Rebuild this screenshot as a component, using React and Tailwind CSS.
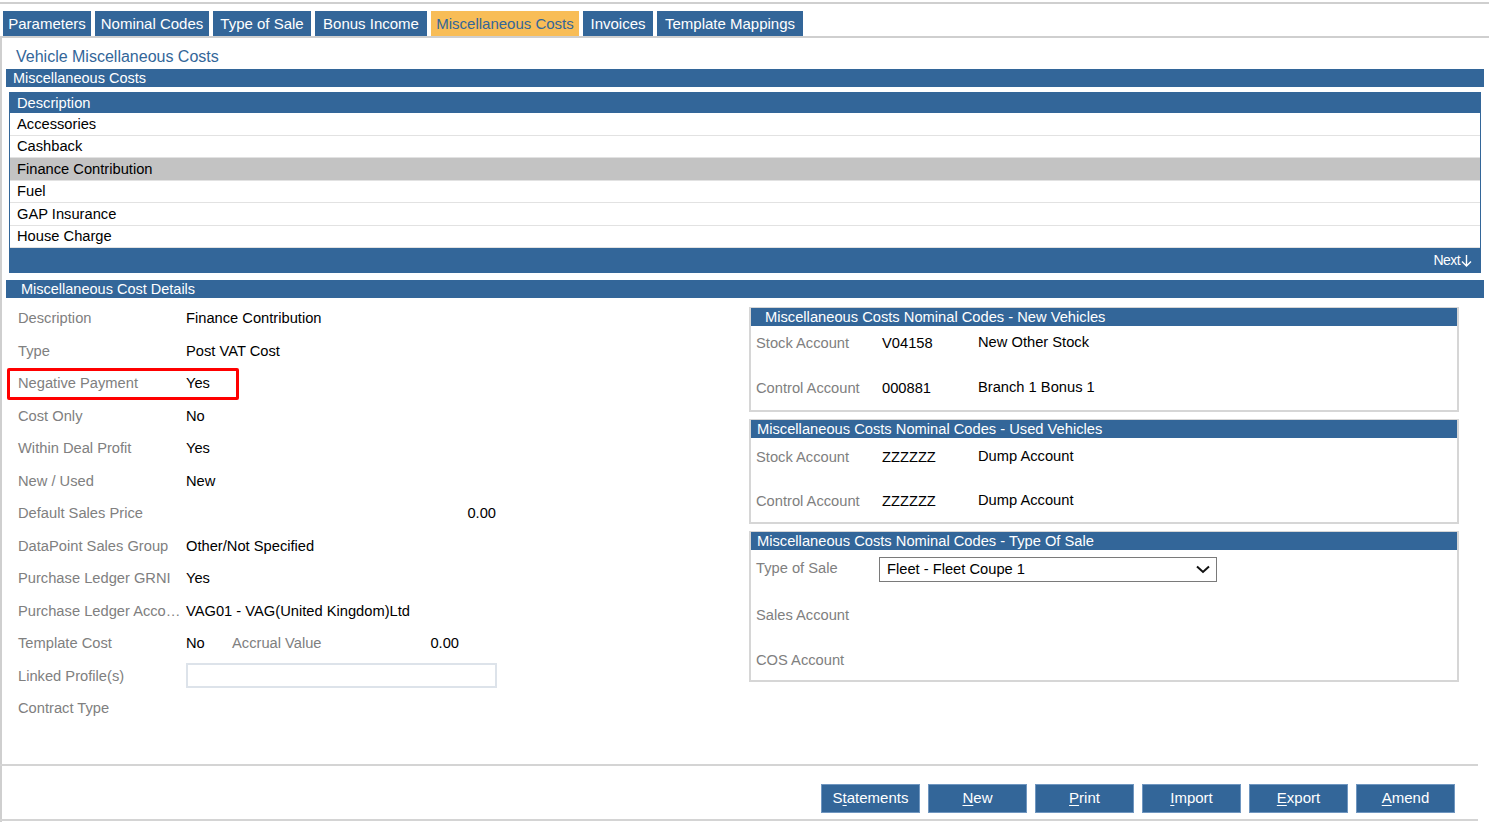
import React from "react";

const tabs = [
  ["Parameters", "w-[88px]"],
  ["Nominal Codes", "w-[114px]"],
  ["Type of Sale", "w-[98px]"],
  ["Bonus Income", "w-[112px]"],
  ["Miscellaneous Costs", "w-[148px]"],
  ["Invoices", "w-[70px]"],
  ["Template Mappings", "w-[146px]"],
];

const rows = [
  "Accessories",
  "Cashback",
  "Finance Contribution",
  "Fuel",
  "GAP Insurance",
  "House Charge",
];

function Field({ label, children, highlight }) {
  return (
    <div className="relative flex h-[32.5px] items-center">
      {highlight && (
        <div className="pointer-events-none absolute left-[5px] top-[1px] h-[32px] w-[232px] rounded-[2px] border-[3px] border-[#ff0000]" />
      )}
      <div className="w-[184px] shrink-0 truncate pl-[16px] pr-[2px] text-[14.7px] text-[#808080]">{label}</div>
      <div className="flex flex-1 items-center text-[14.7px] text-black">{children}</div>
    </div>
  );
}

function PanelHeader({ children, pl = "pl-[8px]" }) {
  return (
    <div className={`flex h-[18px] items-center bg-[#336699] ${pl} text-[14.7px] leading-none text-white`}>
      {children}
    </div>
  );
}

function AccRow({ label, code, name }) {
  return (
    <div className="flex h-[22px] items-center text-[14.7px]">
      <div className="w-[131px] shrink-0 pl-[5px] text-[#808080]">{label}</div>
      <div className="w-[96px] shrink-0 text-black">{code}</div>
      <div className="-mt-[2px] text-black">{name}</div>
    </div>
  );
}

function Btn({ pre = "", u, post }) {
  return (
    <button className="flex h-[29px] w-[99px] items-center justify-center border border-[#6f96c0] bg-[#336699] text-[15px] text-white">
      {pre}
      <span className="underline underline-offset-2">{u}</span>
      {post}
    </button>
  );
}

export default function App() {
  return (
    <div className="relative h-[822px] w-[1489px] overflow-hidden bg-white font-['Liberation_Sans',Arial,sans-serif]">
      <div className="mt-[2px] h-[2px] w-full bg-[#cfcfcf]" />
      {/* tabs */}
      <div className="mt-[7px] flex h-[25px] gap-[4px] pl-[3px]">
        {tabs.map(([t, w]) => (
          <div
            key={t}
            className={`flex items-center justify-center ${w} text-[15px] leading-none ${
              t === "Miscellaneous Costs"
                ? "bg-[#f8bd57] text-[#336699]"
                : "bg-[#336699] text-white"
            }`}
          >
            {t}
          </div>
        ))}
      </div>
      {/* content frame */}
      <div className="h-[786px] border-l-2 border-t-2 border-[#cfcfcf]">
        <div className="flex h-[31px] items-end pb-[4px] pl-[14px] text-[16px] leading-none text-[#336699]">
          Vehicle Miscellaneous Costs
        </div>
        <div className="ml-[4px] mr-[5px] flex h-[18px] items-center bg-[#336699] pl-[7px] text-[14.5px] leading-none text-white">
          Miscellaneous Costs
        </div>
        {/* grid */}
        <div className="ml-[7px] mr-[8px] mt-[5px] border border-[#336699]">
          <div className="flex h-[20px] items-center bg-[#336699] pl-[7px] text-[14.7px] leading-none text-white">
            Description
          </div>
          {rows.map((r) => (
            <div
              key={r}
              className={`flex h-[22.5px] items-center border-b border-[#e2e2e2] pl-[7px] text-[14.7px] text-black ${
                r === "Finance Contribution" ? "bg-[#c3c3c3]" : "bg-white"
              }`}
            >
              {r}
            </div>
          ))}
          <div className="flex h-[24px] items-center justify-end bg-[#336699] pr-[8px] text-[14px] text-white">
            <span className="tracking-[-0.6px]">Next</span>
            <svg width="11" height="13" viewBox="0 0 11 13" className="ml-[1px]">
              <path d="M5.5 1 V12 M1 7.5 L5.5 12 L10 7.5" stroke="white" strokeWidth="1.4" fill="none" />
            </svg>
          </div>
        </div>
        <div className="ml-[4px] mr-[5px] mt-[7px] flex h-[18px] items-center bg-[#336699] pl-[15px] text-[14.5px] leading-none text-white">
          Miscellaneous Cost Details
        </div>
        {/* details */}
        <div className="flex">
          <div className="w-[747px] shrink-0 pt-[4px]">
            <Field label="Description">Finance Contribution</Field>
            <Field label="Type">Post VAT Cost</Field>
            <Field label="Negative Payment" highlight>
              Yes
            </Field>
            <Field label="Cost Only">No</Field>
            <Field label="Within Deal Profit">Yes</Field>
            <Field label="New / Used">New</Field>
            <Field label="Default Sales Price">
              <div className="w-[310px] text-right">0.00</div>
            </Field>
            <Field label="DataPoint Sales Group">Other/Not Specified</Field>
            <Field label="Purchase Ledger GRNI">Yes</Field>
            <Field label="Purchase Ledger Account">VAG01 - VAG(United Kingdom)Ltd</Field>
            <Field label="Template Cost">
              <div className="w-[46px]">No</div>
              <div className="w-[160px] text-[#808080]">Accrual Value</div>
              <div className="w-[67px] text-right">0.00</div>
            </Field>
            <Field label="Linked Profile(s)">
              <div className="h-[25px] w-[311px] border-2 border-[#dde3ea]" />
            </Field>
            <Field label="Contract Type"></Field>
          </div>
          {/* right panels */}
          <div className="flex w-[710px] flex-col gap-[7px] pt-[9px]">
            <div className="border-2 border-t border-[#d6d6d6]">
              <PanelHeader pl="pl-[14px]">Miscellaneous Costs Nominal Codes - New Vehicles</PanelHeader>
              <div className="flex flex-col gap-[23px] pb-[11px] pt-[6px]">
                <AccRow label="Stock Account" code="V04158" name="New Other Stock" />
                <AccRow label="Control Account" code="000881" name="Branch 1 Bonus 1" />
              </div>
            </div>
            <div className="border-2 border-t border-[#d6d6d6]">
              <PanelHeader pl="pl-[6px]">Miscellaneous Costs Nominal Codes - Used Vehicles</PanelHeader>
              <div className="flex flex-col gap-[22px] pb-[10px] pt-[8px]">
                <AccRow label="Stock Account" code="ZZZZZZ" name="Dump Account" />
                <AccRow label="Control Account" code="ZZZZZZ" name="Dump Account" />
              </div>
            </div>
            <div className="border-2 border-t border-[#d6d6d6]">
              <PanelHeader pl="pl-[6px]">Miscellaneous Costs Nominal Codes - Type Of Sale</PanelHeader>
              <div className="flex flex-col gap-[23px] pb-[9px] pt-[7px]">
                <div className="flex h-[24px] items-center text-[14.7px]">
                  <div className="-mt-[2px] w-[128px] shrink-0 pl-[5px] text-[#808080]">Type of Sale</div>
                  <div className="flex h-[25px] w-[338px] items-center justify-between border border-[#7a7a7a] pl-[7px] pr-[6px] text-black">
                    <span>Fleet - Fleet Coupe 1</span>
                    <svg width="14" height="9" viewBox="0 0 14 9">
                      <path d="M1 1.5 L7 7 L13 1.5" stroke="#111" strokeWidth="2" fill="none" />
                    </svg>
                  </div>
                </div>
                <div className="flex h-[22px] items-center pl-[5px] text-[14.7px] text-[#808080]">Sales Account</div>
                <div className="flex h-[22px] items-center pl-[5px] text-[14.7px] text-[#808080]">COS Account</div>
              </div>
            </div>
          </div>
        </div>
        {/* footer */}
        <div className="absolute left-0 top-[764px] h-[2px] w-[1478px] bg-[#d4d4d4]" />
      </div>
      <div className="absolute left-[821px] top-[784px] flex gap-[8px]">
        <Btn pre="S" u="t" post="atements" />
        <Btn u="N" post="ew" />
        <Btn u="P" post="rint" />
        <Btn u="I" post="mport" />
        <Btn u="E" post="xport" />
        <Btn u="A" post="mend" />
      </div>
      <div className="absolute left-0 top-[819px] h-[2px] w-[1478px] bg-[#d4d4d4]" />
    </div>
  );
}
